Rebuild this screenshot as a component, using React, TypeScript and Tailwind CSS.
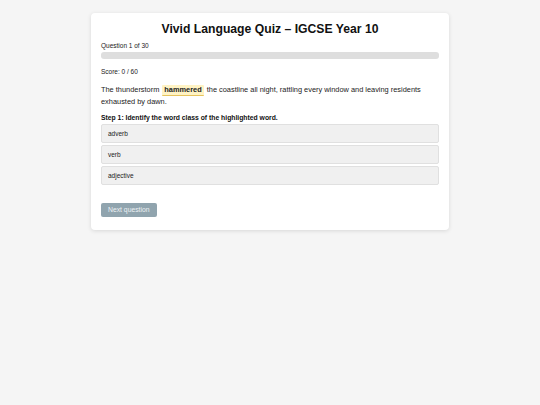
export default function App() {
  const options = ["adverb", "verb", "adjective"];
  return (
    <div className="min-h-[405px] bg-[#f5f5f5] pt-[13px]" style={{ fontFamily: '"Liberation Sans", Arial, sans-serif' }}>
      <div className="mx-auto w-[358px] rounded-[4px] bg-white px-[10px] pt-[7px] pb-[13px] shadow-[0_1px_4px_rgba(0,0,0,0.12)]">
        <h1 className="text-center text-[12.2px] font-bold leading-[18px] text-[#111]">Vivid Language Quiz – IGCSE Year 10</h1>
        <div className="mt-[4px] text-[6.5px] leading-[8px] text-[#222]">Question 1 of 30</div>
        <div className="mt-[2px] h-[7px] w-full rounded-[3px] bg-[#dedede]"></div>
        <div className="mt-[9px] text-[6.5px] leading-[8px] text-[#222]">Score: 0 / 60</div>
        <p className="mt-[8px] text-[7.4px] leading-[12px] text-[#222]">
          The thunderstorm
          <span className="mx-[3px] inline-block rounded-[1px] border-b border-[#e6c35c] bg-[#fff3c4] px-[2px] leading-[10px] font-bold">hammered</span>
          the coastline all night, rattling every window and leaving residents exhausted by dawn.
        </p>
        <div className="mt-[5px] text-[6.8px] font-bold leading-[9px] text-[#111]">Step 1: Identify the word class of the highlighted word.</div>
        <div className="mt-[2px] flex flex-col gap-[2px]">
          {options.map((o) => (
            <div key={o} className="flex h-[19px] items-center rounded-[2px] border border-[#e0e0e0] bg-[#f0f0f0] px-[6px] text-[6.5px] text-[#222]">
              {o}
            </div>
          ))}
        </div>
        <div className="mt-[18px] flex">
          <button className="h-[14px] rounded-[2px] bg-[#90a4ae] px-[7px] text-[6.8px] leading-[14px] text-[#eef2f4]">Next question</button>
        </div>
      </div>
    </div>
  );
}
